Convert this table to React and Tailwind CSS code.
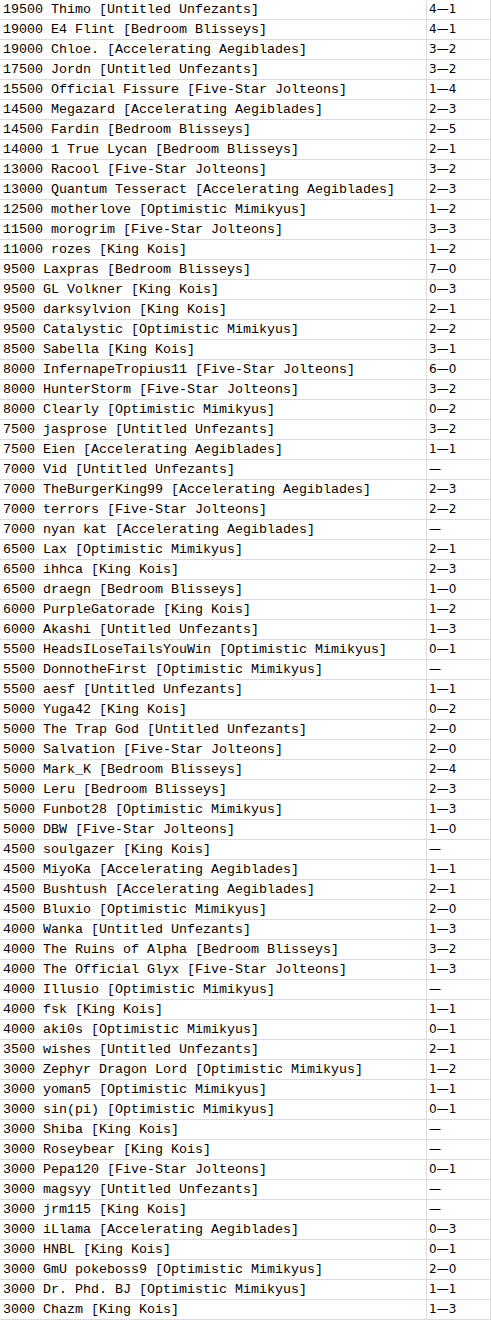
const rows = [
  ["19500", "Thimo [Untitled Unfezants]", "4—1"],
  ["19000", "E4 Flint [Bedroom Blisseys]", "4—1"],
  ["19000", "Chloe. [Accelerating Aegiblades]", "3—2"],
  ["17500", "Jordn [Untitled Unfezants]", "3—2"],
  ["15500", "Official Fissure [Five-Star Jolteons]", "1—4"],
  ["14500", "Megazard [Accelerating Aegiblades]", "2—3"],
  ["14500", "Fardin [Bedroom Blisseys]", "2—5"],
  ["14000", "1 True Lycan [Bedroom Blisseys]", "2—1"],
  ["13000", "Racool [Five-Star Jolteons]", "3—2"],
  ["13000", "Quantum Tesseract [Accelerating Aegiblades]", "2—3"],
  ["12500", "motherlove [Optimistic Mimikyus]", "1—2"],
  ["11500", "morogrim [Five-Star Jolteons]", "3—3"],
  ["11000", "rozes [King Kois]", "1—2"],
  ["9500", "Laxpras [Bedroom Blisseys]", "7—0"],
  ["9500", "GL Volkner [King Kois]", "0—3"],
  ["9500", "darksylvion [King Kois]", "2—1"],
  ["9500", "Catalystic [Optimistic Mimikyus]", "2—2"],
  ["8500", "Sabella [King Kois]", "3—1"],
  ["8000", "InfernapeTropius11 [Five-Star Jolteons]", "6—0"],
  ["8000", "HunterStorm [Five-Star Jolteons]", "3—2"],
  ["8000", "Clearly [Optimistic Mimikyus]", "0—2"],
  ["7500", "jasprose [Untitled Unfezants]", "3—2"],
  ["7500", "Eien [Accelerating Aegiblades]", "1—1"],
  ["7000", "Vid [Untitled Unfezants]", "—"],
  ["7000", "TheBurgerKing99 [Accelerating Aegiblades]", "2—3"],
  ["7000", "terrors [Five-Star Jolteons]", "2—2"],
  ["7000", "nyan kat [Accelerating Aegiblades]", "—"],
  ["6500", "Lax [Optimistic Mimikyus]", "2—1"],
  ["6500", "ihhca [King Kois]", "2—3"],
  ["6500", "draegn [Bedroom Blisseys]", "1—0"],
  ["6000", "PurpleGatorade [King Kois]", "1—2"],
  ["6000", "Akashi [Untitled Unfezants]", "1—3"],
  ["5500", "HeadsILoseTailsYouWin [Optimistic Mimikyus]", "0—1"],
  ["5500", "DonnotheFirst [Optimistic Mimikyus]", "—"],
  ["5500", "aesf [Untitled Unfezants]", "1—1"],
  ["5000", "Yuga42 [King Kois]", "0—2"],
  ["5000", "The Trap God [Untitled Unfezants]", "2—0"],
  ["5000", "Salvation [Five-Star Jolteons]", "2—0"],
  ["5000", "Mark_K [Bedroom Blisseys]", "2—4"],
  ["5000", "Leru [Bedroom Blisseys]", "2—3"],
  ["5000", "Funbot28 [Optimistic Mimikyus]", "1—3"],
  ["5000", "DBW [Five-Star Jolteons]", "1—0"],
  ["4500", "soulgazer [King Kois]", "—"],
  ["4500", "MiyoKa [Accelerating Aegiblades]", "1—1"],
  ["4500", "Bushtush [Accelerating Aegiblades]", "2—1"],
  ["4500", "Bluxio [Optimistic Mimikyus]", "2—0"],
  ["4000", "Wanka [Untitled Unfezants]", "1—3"],
  ["4000", "The Ruins of Alpha [Bedroom Blisseys]", "3—2"],
  ["4000", "The Official Glyx [Five-Star Jolteons]", "1—3"],
  ["4000", "Illusio [Optimistic Mimikyus]", "—"],
  ["4000", "fsk [King Kois]", "1—1"],
  ["4000", "aki0s [Optimistic Mimikyus]", "0—1"],
  ["3500", "wishes [Untitled Unfezants]", "2—1"],
  ["3000", "Zephyr Dragon Lord [Optimistic Mimikyus]", "1—2"],
  ["3000", "yoman5 [Optimistic Mimikyus]", "1—1"],
  ["3000", "sin(pi) [Optimistic Mimikyus]", "0—1"],
  ["3000", "Shiba [King Kois]", "—"],
  ["3000", "Roseybear [King Kois]", "—"],
  ["3000", "Pepa120 [Five-Star Jolteons]", "0—1"],
  ["3000", "magsyy [Untitled Unfezants]", "—"],
  ["3000", "jrm115 [King Kois]", "—"],
  ["3000", "iLlama [Accelerating Aegiblades]", "0—3"],
  ["3000", "HNBL [King Kois]", "0—1"],
  ["3000", "GmU pokeboss9 [Optimistic Mimikyus]", "2—0"],
  ["3000", "Dr. Phd. BJ [Optimistic Mimikyus]", "1—1"],
  ["3000", "Chazm [King Kois]", "1—3"],
];

export default function App() {
  return (
    <div className="w-[491px] bg-white text-black">
      <div className="border-r border-[#dcdcdc]">
        {rows.map((r, i) => (
          <div key={i} className="flex h-[20px] border-b border-[#dcdcdc]">
            <div className="w-[427px] border-r border-[#dcdcdc] pl-[3px] font-['Liberation_Mono',monospace] text-[13.33px] leading-[19px] whitespace-pre">
              {r[0] + " " + r[1]}
            </div>
            <div className="flex-1 pl-[2px] font-['DejaVu_Sans',sans-serif] text-[12px] leading-[19px]">
              {r[2]}
            </div>
          </div>
        ))}
      </div>
    </div>
  );
}
